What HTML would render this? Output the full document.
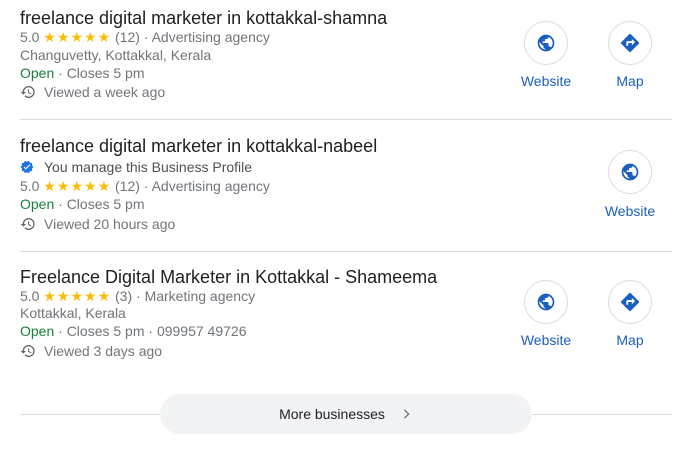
<!DOCTYPE html>
<html><head><meta charset="utf-8"><style>
body{margin:0;width:691px;height:457px;background:#fff;font-family:"Liberation Sans",Arial,sans-serif;position:relative;overflow:hidden}
.a{position:absolute;white-space:nowrap}
.t{font-size:18px;color:#202124;left:20px}
.l{font-size:14px;color:#70757a;left:20px}
.star{color:#fbbc04;letter-spacing:1px;font-size:14px}
.g{color:#188038}
.sep{position:absolute;left:20px;width:652px;height:1px;background:#dadce0}
.c{position:absolute;width:42px;height:42px;border:1px solid #dadce0;border-radius:50%;display:flex;align-items:center;justify-content:center}
.lab{position:absolute;font-size:14px;color:#1a5fbf;width:80px;text-align:center}
</style></head><body>
<svg width="0" height="0" style="position:absolute"><defs>
<symbol id="globe" viewBox="0 0 24 24"><path fill="#1a5fbf" d="M12 2a10 10 0 1 0 0 20 10 10 0 0 0 0-20zm-1 17.9A8 8 0 0 1 4.1 10.9L9 15.8v1a2 2 0 0 0 2 2zm6.9-2.5A2 2 0 0 0 16 16h-1v-3a1 1 0 0 0-1-1H8v-2h2a1 1 0 0 0 1-1V7h2a2 2 0 0 0 2-2v-.4a8 8 0 0 1 2.9 12.8z"/></symbol>
<symbol id="dir" viewBox="0 0 24 24"><path fill="#1a5fbf" d="M21.7 11.3l-9-9a1 1 0 0 0-1.4 0l-9 9a1 1 0 0 0 0 1.4l9 9a1 1 0 0 0 1.4 0l9-9a1 1 0 0 0 0-1.4zM14 14.5V12h-4v3H8v-4a1 1 0 0 1 1-1h5V7.5l3.5 3.5z"/></symbol>
<symbol id="hist" viewBox="0 0 24 24"><path fill="#5f6368" d="M13 3a9 9 0 0 0-9 9H1l4 4 4-4H6a7 7 0 1 1 2.05 4.95l-1.42 1.42A9 9 0 1 0 13 3zm-1 5v5l4.25 2.52.77-1.28-3.52-2.09V8z"/></symbol>
</defs></svg>

<div class="a t" style="top:8px">freelance digital marketer in kottakkal-shamna</div>
<div class="a l" style="top:29px">5.0 <span class="star">★★★★★</span> (12) · Advertising agency</div>
<div class="a l" style="top:47px">Changuvetty, Kottakkal, Kerala</div>
<div class="a l" style="top:65px"><span class="g">Open</span> · Closes 5 pm</div>
<div class="a l" style="top:84px"><svg width="16" height="16" style="vertical-align:-3px;margin-right:8px"><use href="#hist"/></svg>Viewed a week ago</div>
<div class="c" style="left:524px;top:21px"><svg width="20" height="20"><use href="#globe"/></svg></div>
<div class="lab" style="left:506px;top:73px">Website</div>
<div class="c" style="left:608px;top:21px"><svg width="22" height="22"><use href="#dir"/></svg></div>
<div class="lab" style="left:590px;top:73px">Map</div>
<div class="sep" style="top:119px"></div>

<div class="a t" style="top:136px">freelance digital marketer in kottakkal-nabeel</div>
<div class="a l" style="top:159px"><svg width="14" height="14" viewBox="0 0 24 24" style="vertical-align:-2px;margin-right:10px"><path fill="#1a73e8" d="M23 12l-2.4-2.8.3-3.7-3.6-.8-1.9-3.2L12 3 8.6 1.5 6.7 4.7l-3.6.8.3 3.7L1 12l2.4 2.8-.3 3.7 3.6.8 1.9 3.2L12 21l3.4 1.5 1.9-3.2 3.6-.8-.3-3.7z"/><path fill="#fff" d="M10 16.5l-4-4 1.4-1.4 2.6 2.6 6.6-6.6L18 8.5z"/></svg><span style="color:#4d5156">You manage this Business Profile</span></div>
<div class="a l" style="top:178px">5.0 <span class="star">★★★★★</span> (12) · Advertising agency</div>
<div class="a l" style="top:196px"><span class="g">Open</span> · Closes 5 pm</div>
<div class="a l" style="top:216px"><svg width="16" height="16" style="vertical-align:-3px;margin-right:8px"><use href="#hist"/></svg>Viewed 20 hours ago</div>
<div class="c" style="left:608px;top:150px"><svg width="20" height="20"><use href="#globe"/></svg></div>
<div class="lab" style="left:590px;top:203px">Website</div>
<div class="sep" style="top:251px"></div>

<div class="a t" style="top:267px">Freelance Digital Marketer in Kottakkal - Shameema</div>
<div class="a l" style="top:288px">5.0 <span class="star">★★★★★</span> (3) · Marketing agency</div>
<div class="a l" style="top:305px">Kottakkal, Kerala</div>
<div class="a l" style="top:323px"><span class="g">Open</span> · Closes 5 pm · 099957 49726</div>
<div class="a l" style="top:343px"><svg width="16" height="16" style="vertical-align:-3px;margin-right:8px"><use href="#hist"/></svg>Viewed 3 days ago</div>
<div class="c" style="left:524px;top:280px"><svg width="20" height="20"><use href="#globe"/></svg></div>
<div class="lab" style="left:506px;top:332px">Website</div>
<div class="c" style="left:608px;top:280px"><svg width="22" height="22"><use href="#dir"/></svg></div>
<div class="lab" style="left:590px;top:332px">Map</div>

<div class="sep" style="top:414px"></div>
<div style="position:absolute;left:160px;top:394px;width:372px;height:40px;border-radius:20px;background:#f1f3f4;display:flex;align-items:center;justify-content:center;font-size:14px;color:#202124">More businesses<svg width="14" height="14" viewBox="0 0 24 24" style="margin-left:14px"><path fill="#5f6368" d="M8.6 18.6L15.2 12 8.6 5.4 10 4l8 8-8 8z"/></svg></div>
</body></html>
